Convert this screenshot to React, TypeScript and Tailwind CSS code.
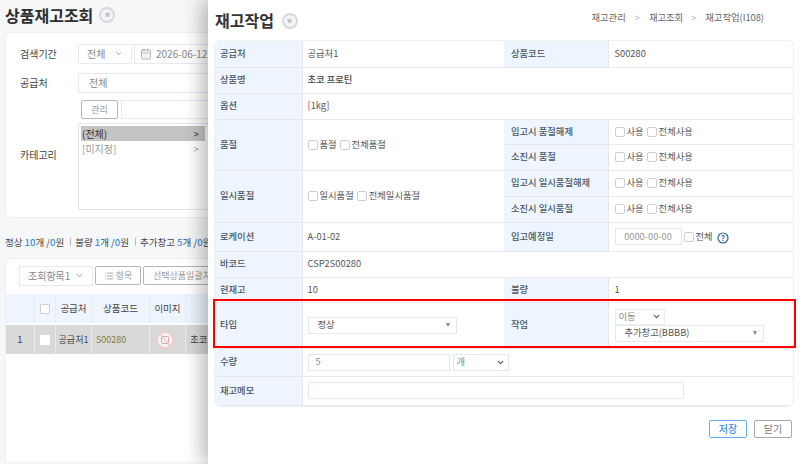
import React from 'react'
import { ChevronDown, CalendarDays, List, Star } from 'lucide-react'

const font = "font-['Noto_Sans_CJK_KR','Noto_Sans',sans-serif]"

function StarBadge({ size }: { size: string }) {
  return (
    <span className={`inline-flex items-center justify-center rounded-full border-2 border-[#d5d8dc] bg-[#f4f5f6] ${size}`}>
      <Star className="w-[60%] h-[60%] text-[#bfc3c8]" fill="currentColor" strokeWidth={0} />
    </span>
  )
}

function Check({ label }: { label: string }) {
  return (
    <span className="inline-flex items-center mr-[3px]">
      <span className="w-[10px] h-[10px] mr-[2px] rounded-[2px] border border-[#ccd0d4] bg-white" />
      <span>{label}</span>
    </span>
  )
}

function Checks({ items }: { items: string[] }) {
  return (
    <div className="flex items-center">
      {items.map((i) => (
        <Check key={i} label={i} />
      ))}
    </div>
  )
}

function Caret() {
  return <span className="w-0 h-0 border-x-[2.5px] border-x-transparent border-t-[4px] border-t-[#888]" />
}

function Th({ children, rowSpan, right }: { children: React.ReactNode; rowSpan?: number; right?: boolean }) {
  return (
    <th rowSpan={rowSpan} className={`bg-[#eef5fe] border-b border-r border-[#e4e8ec] text-left font-medium text-[#4a5663] ${right ? 'pl-[7px]' : 'pl-[5px]'}`}>
      {children}
    </th>
  )
}

function Td({ children, rowSpan, colSpan, right }: { children: React.ReactNode; rowSpan?: number; colSpan?: number; right?: boolean }) {
  return (
    <td rowSpan={rowSpan} colSpan={colSpan} className={`border-b border-[#e8eaec] text-[#555] ${right ? 'pl-[6px]' : 'pl-[5px]'}`}>
      {children}
    </td>
  )
}

function BackPage() {
  return (
    <div className="w-[800px] h-[464px] bg-[#f6f7f9] px-[5px] text-[10px] text-[#555]">
      <div className="h-[32px] pb-[3px] flex items-center gap-[6px]">
        <h1 className="text-[16px] font-bold text-[#2f2f2f]">상품재고조회</h1>
        <StarBadge size="w-[16px] h-[16px]" />
      </div>
      <div className="h-[186px] w-[400px] bg-white rounded-[6px] border border-[#eef0f2] pl-[14px] pt-[10px]">
        <div className="flex items-center h-[21px]">
          <span className="w-[58px] text-[#444]">검색기간</span>
          <div className="w-[54px] h-[20px] border border-[#e6ebf2] flex items-center justify-between px-[8px] text-[#888]">
            전체 <ChevronDown className="w-[9px] h-[9px]" />
          </div>
          <div className="ml-[2px] w-[120px] h-[20px] border border-[#e6ebf2] flex items-center px-[5px] gap-[4px] text-[#888]">
            <CalendarDays className="w-[12px] h-[12px]" strokeWidth={1.2} /> 2026-06-12
          </div>
        </div>
        <div className="flex items-center h-[21px] mt-[8px]">
          <span className="w-[58px] text-[#444]">공급처</span>
          <div className="w-[200px] h-[20px] border border-[#e6ebf2] flex items-center px-[10px] text-[#888]">전체</div>
        </div>
        <div className="flex items-center mt-[7px]">
          <span className="w-[58px] pb-[2px] text-[#444]">카테고리</span>
          <div className="w-[200px]">
            <div className="flex items-center gap-[3px] pl-[3px]">
              <span className="w-[37px] h-[19px] border border-[#b5b5b5] rounded-[2px] flex items-center justify-center text-[#999] text-[9px]">관리</span>
              <span className="flex-1 h-[19px] border border-[#e6ebf2]" />
            </div>
            <div className="mt-[4px] h-[87px] border border-[#dfe6ee] p-[2px]">
              <div className="h-[15px] w-[124px] bg-[#c4c4c4] flex items-center justify-between px-[1px] pr-[6px] text-[#333]">
                <span>(전체)</span><span>&gt;</span>
              </div>
              <div className="h-[15px] w-[124px] flex items-center justify-between px-[1px] pr-[6px] text-[#999]">
                <span>[미지정]</span><span>&gt;</span>
              </div>
            </div>
          </div>
        </div>
      </div>
      <div className="mt-[17px] h-[14px] flex items-center whitespace-nowrap text-[9.5px] text-[#444]">
        <span>정상 <b className="font-medium text-[#3b8fe8]">10</b>개 /<b className="font-medium text-[#3b8fe8]">0</b>원</span>
        <span className="ml-[6px] mr-[4px] h-[8px] border-l border-[#bbb]" />
        <span>불량 <b className="font-medium text-[#3b8fe8]">1</b>개 /<b className="font-medium text-[#3b8fe8]">0</b>원</span>
        <span className="ml-[6px] mr-[4px] h-[8px] border-l border-[#bbb]" />
        <span>추가창고 <b className="font-medium text-[#3b8fe8]">5</b>개 /<b className="font-medium text-[#3b8fe8]">0</b>원</span>
      </div>
      <div className="mt-[9px] h-[205px] w-[400px] bg-white rounded-t-[6px] border border-[#eef0f2]">
        <div className="h-[35px] pb-[2px] flex items-center pl-[13px] gap-[2px] whitespace-nowrap">
          <div className="w-[74px] h-[20px] border border-[#e6ebf2] flex items-center justify-between px-[8px] text-[#888]">
            조회항목1 <ChevronDown className="w-[9px] h-[9px]" />
          </div>
          <div className="w-[46px] h-[19px] border border-[#b5b5b5] rounded-[2px] flex items-center justify-center gap-[2px] text-[#999] text-[9px]">
            <List className="w-[10px] h-[10px]" /> 항목
          </div>
          <div className="w-[90px] h-[19px] border border-[#b5b5b5] rounded-[2px] flex items-center pl-[9px] text-[#999] text-[9px]">선택상품일괄처리</div>
        </div>
        <div className="grid grid-cols-[29px_21px_36px_58px_36px_1fr] h-[29px] bg-[#eef5fe] text-[#444] divide-x divide-[#e3ebf4] text-[9.5px]">
          <span />
          <span className="flex items-center justify-center"><span className="w-[10px] h-[10px] bg-white border border-[#ccd0d4] rounded-[1px]" /></span>
          <span className="flex items-center justify-center">공급처</span>
          <span className="flex items-center justify-center">상품코드</span>
          <span className="flex items-center justify-center">이미지</span>
          <span />
        </div>
        <div className="mt-[2px] grid grid-cols-[29px_21px_36px_58px_36px_1fr] h-[29px] bg-[#d9d9d9] text-[#444] text-[9.5px] divide-x divide-[#e8ecf0]">
          <span className="flex items-center justify-center">1</span>
          <span className="flex items-center justify-center"><span className="w-[10px] h-[10px] bg-white rounded-[1px]" /></span>
          <span className="flex items-center justify-center whitespace-nowrap text-[9px]">공급처1</span>
          <span className="flex items-center pl-[4px] text-[#85803f] text-[9px]">S00280</span>
          <span className="flex items-center pl-[6px]">
            <svg viewBox="0 0 18 18" className="w-[18px] h-[18px]">
              <circle cx="9" cy="9" r="8" fill="#f4f2f2" stroke="#f4c9c9" strokeWidth="1.6" />
              <rect x="5.5" y="5.5" width="7" height="7" rx="1" fill="none" stroke="#c9b0b0" strokeWidth="1" />
              <path d="M4 4 14 14" stroke="#f2c4c4" strokeWidth="1.2" />
            </svg>
          </span>
          <span className="flex items-center pl-[4px]">초코 프로틴</span>
        </div>
      </div>
    </div>
  )
}

function Modal() {
  return (
    <div className="absolute left-[208px] top-0 w-[592px] h-[464px] bg-white shadow-[-6px_0_18px_rgba(0,0,0,0.28)] pl-[6px] text-[9.3px] text-[#555]">
      <div className="h-[40px] flex items-center justify-between">
        <div className="flex items-center gap-[8px]">
          <h2 className="text-[16px] font-bold text-[#333] ml-[1px]">재고작업</h2>
          <StarBadge size="w-[16px] h-[16px] mt-[2px]" />
        </div>
        <div className="flex items-center mr-[36px] mb-[4px] text-[#666]">
          재고관리<span className="mx-[9px] text-[#bbb]">&gt;</span>재고조회<span className="ml-[8px] mr-[9px] text-[#bbb]">&gt;</span>재고작업(I108)
        </div>
      </div>
      <div className="w-[580px] rounded-[6px] border border-[#eef0f2] overflow-hidden">
        <table className="w-full table-fixed border-collapse">
          <colgroup>
            <col className="w-[87px]" />
            <col className="w-[202px]" />
            <col className="w-[104px]" />
            <col />
          </colgroup>
          <tbody>
            <tr className="h-[26px]"><Th>공급처</Th><Td>공급처1</Td><Th right>상품코드</Th><Td right>S00280</Td></tr>
            <tr className="h-[26px]"><Th>상품명</Th><Td colSpan={3}><span className="font-medium text-[#444]">초코 프로틴</span></Td></tr>
            <tr className="h-[26px]"><Th>옵션</Th><Td colSpan={3}>[1kg]</Td></tr>
            <tr className="h-[25px]">
              <Th rowSpan={2}>품절</Th>
              <Td rowSpan={2}><Checks items={['품절', '전체품절']} /></Td>
              <Th right>입고시 품절해제</Th>
              <Td right><Checks items={['사용', '전체사용']} /></Td>
            </tr>
            <tr className="h-[26px]"><Th right>소진시 품절</Th><Td right><Checks items={['사용', '전체사용']} /></Td></tr>
            <tr className="h-[26px]">
              <Th rowSpan={2}>일시품절</Th>
              <Td rowSpan={2}><Checks items={['일시품절', '전체일시품절']} /></Td>
              <Th right>입고시 일시품절해제</Th>
              <Td right><Checks items={['사용', '전체사용']} /></Td>
            </tr>
            <tr className="h-[26px]"><Th right>소진시 일시품절</Th><Td right><Checks items={['사용', '전체사용']} /></Td></tr>
            <tr className="h-[29px]">
              <Th>로케이션</Th>
              <Td>A-01-02</Td>
              <Th right>입고예정일</Th>
              <Td right>
                <div className="flex items-center">
                  <span className="w-[67px] h-[17px] border border-[#e3e9f0] flex items-center justify-center text-[#999] mr-[2px]">0000-00-00</span>
                  <Check label="전체" />
                  <svg viewBox="0 0 12 12" className="w-[12px] h-[12px] ml-[1px] mt-[2px]">
                    <circle cx="6" cy="6" r="5" fill="none" stroke="#2b6496" strokeWidth="1.2" />
                    <text x="6" y="8.7" textAnchor="middle" fontSize="7.5" fontWeight="700" fill="#2b6496">?</text>
                  </svg>
                </div>
              </Td>
            </tr>
            <tr className="h-[26px]"><Th>바코드</Th><Td colSpan={3}>CSP2S00280</Td></tr>
            <tr className="h-[25px]"><Th>현재고</Th><Td>10</Td><Th right>불량</Th><Td right>1</Td></tr>
            <tr className="h-[46px]">
              <Th>타입</Th>
              <Td>
                <div className="w-[149px] h-[17px] border border-[#e3e9f0] flex items-center justify-between pl-[9px] pr-[6px]">
                  정상 <Caret />
                </div>
              </Td>
              <Th right>작업</Th>
              <Td right>
                <div className="w-[50px] h-[16px] border border-[#eceff3] flex items-center justify-between pl-[3px] pr-[3px] text-[#888]">
                  이동 <ChevronDown className="w-[9px] h-[9px] text-[#555]" strokeWidth={3} />
                </div>
                <div className="w-[149px] h-[17px] border border-[#e3e9f0] flex items-center justify-between pl-[9px] pr-[6px]">
                  추가창고(BBBB) <Caret />
                </div>
              </Td>
            </tr>
            <tr className="h-[28px]">
              <Th>수량</Th>
              <Td colSpan={3}>
                <div className="flex items-center gap-[3px]">
                  <span className="w-[142px] h-[17px] border border-[#e3e9f0] flex items-center pl-[7px] text-[#888]">5</span>
                  <span className="w-[56px] h-[17px] border border-[#e3e9f0] flex items-center justify-between px-[3px] text-[#888]">
                    개 <ChevronDown className="w-[9px] h-[9px] text-[#555]" strokeWidth={3} />
                  </span>
                </div>
              </Td>
            </tr>
            <tr className="h-[29px]">
              <Th>재고메모</Th>
              <Td colSpan={3}><span className="block w-[376px] h-[17px] border border-[#e3e9f0]" /></Td>
            </tr>
          </tbody>
        </table>
      </div>
      <div className="w-[578px] mt-[13px] flex justify-end gap-[7px] text-[10px]">
        <span className="w-[38px] h-[18px] border border-[#63aef0] rounded-[2px] flex items-center justify-center text-[#3b8fe8] font-medium">저장</span>
        <span className="w-[38px] h-[18px] border border-[#a9a9a9] rounded-[2px] flex items-center justify-center text-[#777]">닫기</span>
      </div>
    </div>
  )
}

export default function App() {
  return (
    <div className={`relative w-[800px] h-[464px] overflow-hidden ${font}`}>
      <BackPage />
      <Modal />
      {/* 빨간 강조 박스 */}
      <div className="absolute left-[213px] top-[299px] w-[583px] h-[49px] border-2 border-[#ff0000] pointer-events-none" />
    </div>
  )
}
